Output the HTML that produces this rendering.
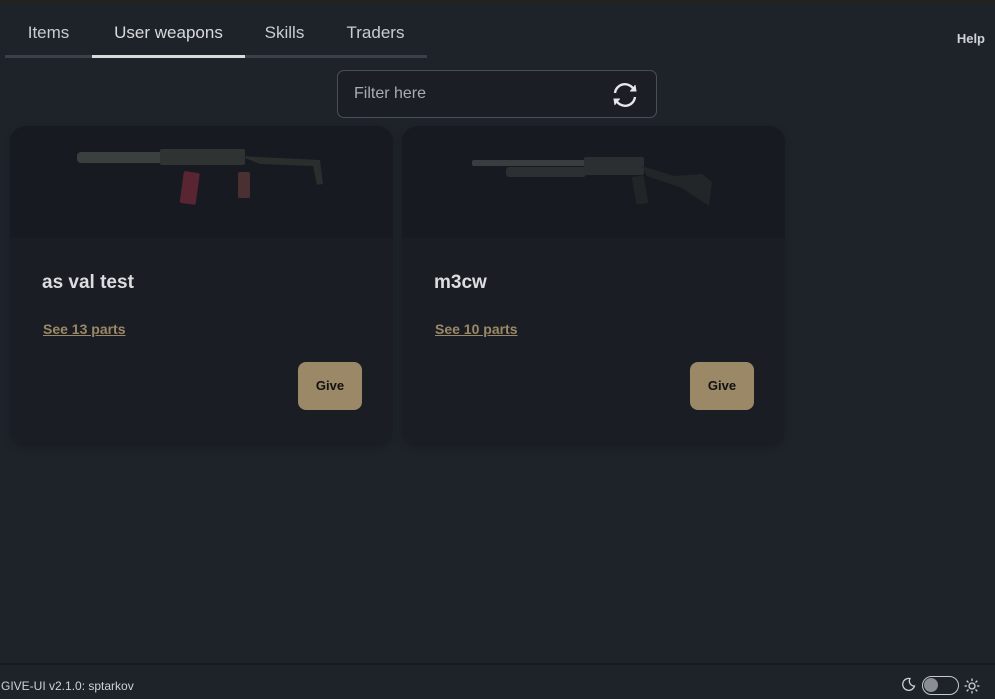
<!DOCTYPE html>
<html><head><style>
*{margin:0;padding:0;box-sizing:border-box}
body{width:995px;height:699px;background:#1e232a;font-family:"Liberation Sans",sans-serif;color:#d6d8db;position:relative;overflow:hidden}
.top{position:absolute;left:0;top:0;width:995px;height:3px;background:#24221f}
.tabs{position:absolute;left:5px;top:18px;height:40px;width:422px;border-bottom:3px solid #3c4048;display:flex}
.tab{font-size:17px;color:#c9ccd0;padding:0 0;height:40px;line-height:30px;text-align:center}
.tab.a{border-bottom:3px solid #d9dadb;margin-bottom:-3px;color:#d9dadc}
.help{position:absolute;right:10px;top:31px;font-size:13px;font-weight:bold;color:#d0d2d5}
.filter{position:absolute;left:337px;top:70px;width:320px;height:48px;border:1px solid #4a4f57;border-radius:7px;background:#1b1f25}
.filter span{position:absolute;left:16px;top:14px;font-size:16px;color:#a9adb3}
.filter svg{position:absolute;right:16px;top:10px}
.card{position:absolute;top:126px;width:383px;height:320px;background:#1a1e24;border-radius:16px;overflow:hidden;box-shadow:0 3px 8px rgba(0,0,0,.15)}
.img{height:112px;background:#171a20;position:relative}
.title{position:absolute;left:32px;top:146px;font-size:19px;font-weight:bold;color:#dcdde0}
.link{position:absolute;left:33px;top:195px;font-size:14px;font-weight:bold;color:#9a8866;text-decoration:underline}
.give{position:absolute;left:288px;top:236px;width:64px;height:48px;background:#9a8866;border-radius:8px;color:#111;font-weight:bold;font-size:13px;text-align:center;line-height:48px}
.foot{position:absolute;left:0;top:663px;width:995px;height:36px;border-top:2px solid #181b20}
.foot .t{position:absolute;left:1px;top:14px;font-size:12px;color:#cfd1d4}
</style></head><body>
<div class="top"></div>
<div class="tabs">
<div class="tab" style="width:87px">Items</div>
<div class="tab a" style="width:153px">User weapons</div>
<div class="tab" style="width:79px">Skills</div>
<div class="tab" style="width:103px">Traders</div>
</div>
<div class="help">Help</div>
<div class="filter"><span>Filter here</span>
<svg width="30" height="28" viewBox="0 0 30 28" fill="none" stroke="#e6e7e9" stroke-width="2.4">
<path d="M5 12 A10 10 0 0 1 24 9"/><path d="M25 16 A10 10 0 0 1 6 19"/>
<path d="M20 10 L26 10 L25 4" fill="#e6e7e9" stroke-width="1"/><path d="M10 18 L4 18 L5 24" fill="#e6e7e9" stroke-width="1"/>
</svg></div>

<div class="card" style="left:10px">
<div class="img"><svg width="383" height="112">
<rect x="67" y="26" width="95" height="11" rx="4" fill="#3a403e"/>
<rect x="150" y="23" width="85" height="16" rx="2" fill="#2f3433"/>
<path d="M230 30 L310 34 L313 58 L307 59 L303 40 L250 38 Z" fill="#2a2e2d"/>
<rect x="172" y="46" width="16" height="32" rx="2" fill="#5a2533" transform="rotate(8 180 60)"/>
<rect x="228" y="46" width="12" height="26" rx="2" fill="#4a3030"/>
</svg></div>
<div class="title">as val test</div>
<a class="link">See 13 parts</a>
<div class="give">Give</div>
</div>

<div class="card" style="left:402px">
<div class="img"><svg width="383" height="112">
<rect x="70" y="34" width="150" height="6" rx="2" fill="#3a3d3f"/>
<rect x="104" y="41" width="80" height="10" rx="3" fill="#2d3032"/>
<rect x="182" y="31" width="60" height="18" rx="2" fill="#2c2f31"/>
<path d="M240 40 L272 50 L300 48 L310 56 L307 80 L280 62 L245 50 Z" fill="#232628"/>
<rect x="232" y="50" width="12" height="28" rx="2" fill="#222527" transform="rotate(-10 238 64)"/>
</svg></div>
<div class="title">m3cw</div>
<a class="link">See 10 parts</a>
<div class="give">Give</div>
</div>

<div class="foot"><div class="t">GIVE-UI v2.1.0: sptarkov</div>
<svg style="position:absolute;left:902px;top:12px" width="14" height="14" viewBox="0 0 14 14"><path d="M8 1.5 A6 6 0 1 0 12.5 9 A5 5 0 0 1 8 1.5Z" fill="none" stroke="#cfd1d4" stroke-width="1.3"/></svg>
<div style="position:absolute;left:922px;top:11px;width:37px;height:19px;border:1.5px solid #c8cacd;border-radius:10px"><div style="position:absolute;left:1px;top:1px;width:14px;height:14px;border-radius:50%;background:#8a8d91"></div></div>
<svg style="position:absolute;left:964px;top:13px" width="16" height="16" viewBox="0 0 16 16" stroke="#cfd1d4" stroke-width="1.3" fill="none"><circle cx="8" cy="8" r="3"/><path d="M8 0.5v2.5M8 13v2.5M0.5 8h2.5M13 8h2.5M2.7 2.7l1.8 1.8M11.5 11.5l1.8 1.8M2.7 13.3l1.8-1.8M11.5 4.5l1.8-1.8"/></svg>
</div>
</body></html>
